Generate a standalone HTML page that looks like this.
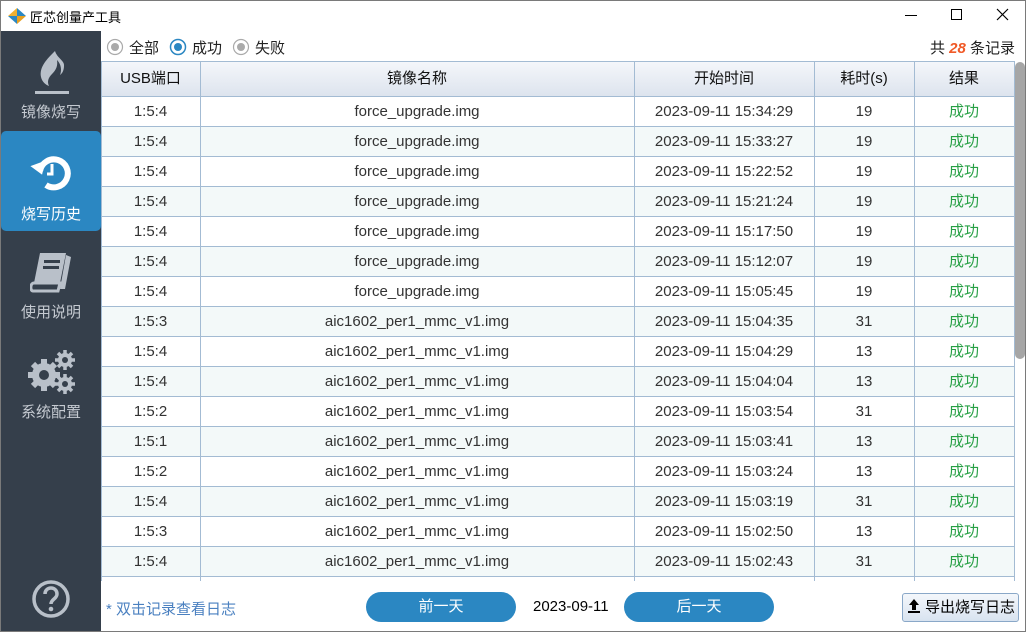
<!DOCTYPE html>
<html><head><meta charset="utf-8"><style>
*{margin:0;padding:0;box-sizing:border-box}
body{width:1026px;height:632px;position:relative;background:#fff;font-family:"Liberation Sans","Noto Sans CJK SC",sans-serif;overflow:hidden;font-size:14px;color:#222}
.win{position:absolute;left:0;top:0;width:1026px;height:632px;border:1px solid #7a7a7a}
.title{position:absolute;left:30px;top:7px;font-size:13px;color:#000}
.side{position:absolute;left:1px;top:31px;width:100px;height:600px;background:#353f4b}
.item{position:absolute;left:0;width:100px;height:100px;color:#c5cad1;font-size:15px;text-align:center}
.item .lbl{position:absolute;top:70px;width:100%}
.act{background:#2b87c2;color:#fff;border-radius:5px}
.abs{position:absolute}
.cell{position:absolute;text-align:center;line-height:30px;font-size:15px;color:#333}
.ok{color:#27a045}
.btn{position:absolute;top:592px;width:150px;height:30px;border-radius:15px;background:#2b87c2;color:#fff;text-align:center;line-height:30px;font-size:15px}
</style></head><body>
<div class="win"></div>
<svg class="abs" style="left:8px;top:8px" width="18" height="16" viewBox="0 0 18 16"><polygon points="9,0 18,8 9,8" fill="#2b87c2"/><polygon points="9,8 18,8 9,16" fill="#e8a020"/><polygon points="0,8 9,8 9,16" fill="#2b87c2"/><polygon points="0,8 9,0 9,8" fill="#f0b030"/></svg>
<div class="title">匠芯创量产工具</div>
<div class="abs" style="left:905px;top:15px;width:12px;height:1px;background:#000"></div>
<div class="abs" style="left:951px;top:9px;width:11px;height:11px;border:1px solid #000"></div>
<svg class="abs" style="left:996px;top:8px" width="13" height="13"><path d="M1 1L12 12M12 1L1 12" stroke="#000" stroke-width="1.2"/></svg>

<div class="side">
 <div class="item" style="top:0">
  <svg class="abs" style="left:32px;top:18px" width="38" height="46" viewBox="0 0 38 46"><path d="M22 2C14 10 6 18 8 28c1 5 5 8 8 9-2-4-1-8 3-12 4-4 6-8 5-14 4 4 5 10 3 15 3-2 4-6 4-9C32 12 24 9 22 2z" fill="#b9c0c9"/><rect x="2" y="42" width="34" height="3" fill="#b9c0c9"/></svg>
  <div class="lbl">镜像烧写</div></div>
 <div class="item act" style="top:100px">
  <svg class="abs" style="left:29px;top:20px" width="44" height="44" viewBox="0 0 44 44"><path d="M10 20A14 14 0 1 1 16 34" fill="none" stroke="#fff" stroke-width="6"/><polygon points="2,12 18,12 10,24" fill="#fff" transform="rotate(-20 10 18)"/><path d="M22 13v10h-5" fill="none" stroke="#fff" stroke-width="3"/></svg>
  <div class="lbl" style="top:72px">烧写历史</div></div>
 <div class="item" style="top:200px">
  <svg class="abs" style="left:29px;top:20px" width="44" height="42" viewBox="0 0 44 42"><path d="M10 2h26l-6 30H4z" fill="#b9c0c9"/><path d="M4 32h26l-2 8H3c-3 0-3-8 1-8z" fill="none" stroke="#b9c0c9" stroke-width="3"/><path d="M36 4l5 2-6 32h-5" fill="#b9c0c9"/><rect x="14" y="9" width="16" height="3" fill="#353f4b"/><rect x="13" y="15" width="16" height="3" fill="#353f4b"/></svg>
  <div class="lbl">使用说明</div></div>
 <div class="item" style="top:300px">
  <svg class="abs" style="left:26px;top:18px" width="50" height="46" viewBox="0 0 50 46">
   <g fill="#b9c0c9"><circle cx="17" cy="26" r="12"/><g stroke="#b9c0c9" stroke-width="6"><path d="M17 10v32M1 26h32M6 15l22 22M28 15L6 37"/></g>
   <circle cx="38" cy="11" r="7"/><g stroke="#b9c0c9" stroke-width="3.5"><path d="M38 1v20M28 11h20M31 4l14 14M45 4L31 18"/></g>
   <circle cx="38" cy="35" r="7"/><g stroke="#b9c0c9" stroke-width="3.5"><path d="M38 25v20M28 35h20M31 28l14 14M45 28L31 42"/></g></g>
   <circle cx="17" cy="26" r="5" fill="#353f4b"/><circle cx="38" cy="11" r="3" fill="#353f4b"/><circle cx="38" cy="35" r="3" fill="#353f4b"/></svg>
  <div class="lbl">系统配置</div></div>
 <svg class="abs" style="left:30px;top:548px" width="40" height="40" viewBox="0 0 40 40"><circle cx="20" cy="20" r="17" fill="none" stroke="#b9c0c9" stroke-width="3.5"/><path d="M14 15c0-4 3-6 6-6s6 2 6 6c0 5-6 5-6 10" fill="none" stroke="#b9c0c9" stroke-width="3.5"/><circle cx="20" cy="30" r="2.3" fill="#b9c0c9"/></svg>
</div>

<svg class="abs" style="left:106px;top:38px" width="190" height="18">
 <circle cx="9" cy="9" r="7.5" fill="#fff" stroke="#aaa" stroke-width="1.2"/><circle cx="9" cy="9" r="4" fill="#aaa"/>
 <circle cx="72" cy="9" r="7.5" fill="#fff" stroke="#2b87c2" stroke-width="1.5"/><circle cx="72" cy="9" r="4" fill="#2b87c2"/>
 <circle cx="135" cy="9" r="7.5" fill="#fff" stroke="#aaa" stroke-width="1.2"/><circle cx="135" cy="9" r="4" fill="#aaa"/>
</svg>
<div class="abs" style="left:129px;top:37px;font-size:15px">全部</div>
<div class="abs" style="left:192px;top:37px;font-size:15px">成功</div>
<div class="abs" style="left:255px;top:37px;font-size:15px">失败</div>
<div class="abs" style="left:930px;top:37px;font-size:15px">共 <i style="color:#f05a28;font-weight:bold">28</i> 条记录</div>

<div class="abs" style="left:101px;top:61px;width:914px;height:36px;background:linear-gradient(#f4f6fa,#dde4ee);border:1px solid #a3bbd3"></div>
<div id="t"></div>
<div class="abs" style="left:1015px;top:62px;width:10px;height:297px;background:#a6a6a6;border-radius:5px"></div>

<div class="abs" style="left:106px;top:598px;font-size:15px;color:#4a80c0">* 双击记录查看日志</div>
<div class="btn" style="left:366px">前一天</div>
<div class="abs" style="left:533px;top:598px;font-size:15px;color:#000">2023-09-11</div>
<div class="btn" style="left:624px">后一天</div>
<div class="abs" style="left:902px;top:593px;width:117px;height:29px;border:1px solid #8aa8c8;border-radius:3px;background:linear-gradient(#f4f7fb,#d8e3f0);font-size:15px;line-height:27px;padding-left:22px;color:#000;white-space:nowrap">导出烧写日志</div>
<svg class="abs" style="left:907px;top:598px" width="14" height="16"><path d="M7 1L2 7h3v5h4V7h3z M1 13h12v2H1z" fill="#000"/></svg>

<script>
var cols=[101,200,634,814,914,1014];
var rows=[["1:5:4","force_upgrade.img","2023-09-11 15:34:29","19"],["1:5:4","force_upgrade.img","2023-09-11 15:33:27","19"],["1:5:4","force_upgrade.img","2023-09-11 15:22:52","19"],["1:5:4","force_upgrade.img","2023-09-11 15:21:24","19"],["1:5:4","force_upgrade.img","2023-09-11 15:17:50","19"],["1:5:4","force_upgrade.img","2023-09-11 15:12:07","19"],["1:5:4","force_upgrade.img","2023-09-11 15:05:45","19"],["1:5:3","aic1602_per1_mmc_v1.img","2023-09-11 15:04:35","31"],["1:5:4","aic1602_per1_mmc_v1.img","2023-09-11 15:04:29","13"],["1:5:4","aic1602_per1_mmc_v1.img","2023-09-11 15:04:04","13"],["1:5:2","aic1602_per1_mmc_v1.img","2023-09-11 15:03:54","31"],["1:5:1","aic1602_per1_mmc_v1.img","2023-09-11 15:03:41","13"],["1:5:2","aic1602_per1_mmc_v1.img","2023-09-11 15:03:24","13"],["1:5:4","aic1602_per1_mmc_v1.img","2023-09-11 15:03:19","31"],["1:5:3","aic1602_per1_mmc_v1.img","2023-09-11 15:02:50","13"],["1:5:4","aic1602_per1_mmc_v1.img","2023-09-11 15:02:43","31"]];
var h="";
var hd=["USB端口","镜像名称","开始时间","耗时(s)","结果"];
for(var c=0;c<5;c++)h+='<div class="cell" style="left:'+cols[c]+'px;top:64px;width:'+(cols[c+1]-cols[c])+'px;color:#111">'+hd[c]+'</div>';
for(var r=0;r<16;r++){var y=97+r*30;
 h+='<div class="abs" style="left:101px;top:'+y+'px;width:914px;height:30px;background:'+(r%2?'#f3f9f9':'#fff')+';border-bottom:1px solid #a3bbd3"></div>';
 for(var c=0;c<5;c++)h+='<div class="cell'+(c==4?' ok':'')+'" style="left:'+cols[c]+'px;top:'+y+'px;width:'+(cols[c+1]-cols[c])+'px">'+(c==4?'成功':rows[r][c])+'</div>';}
for(var c=0;c<6;c++)h+='<div class="abs" style="left:'+cols[c]+'px;top:61px;width:1px;height:520px;background:#a3bbd3"></div>';
document.getElementById("t").innerHTML=h;
</script>
</body></html>
